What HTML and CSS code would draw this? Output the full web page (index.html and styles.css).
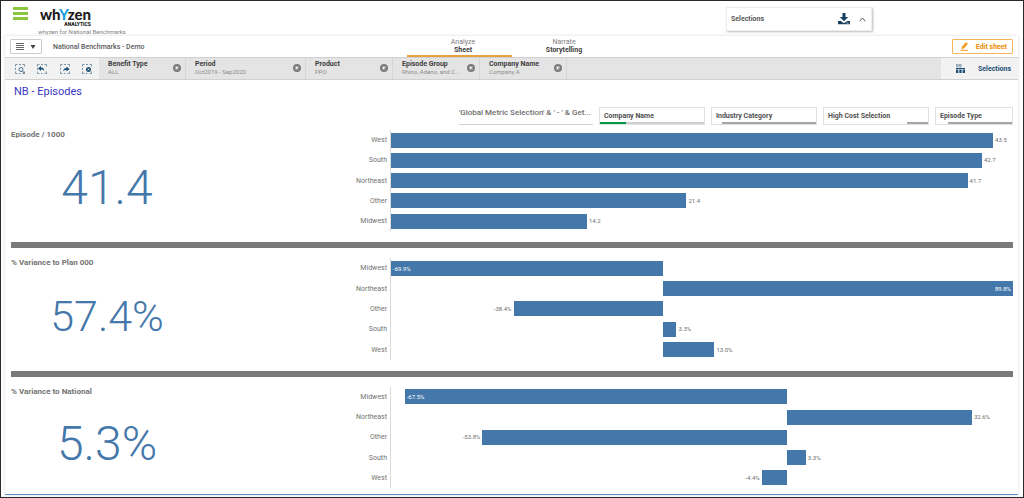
FILE: index.html
```html
<!DOCTYPE html>
<html lang="en">
<head>
<meta charset="utf-8">
<title>whyzen for National Benchmarks</title>
<link rel="stylesheet" href="styles.css">
</head>
<body>
<svg class="sprite" aria-hidden="true">
  <symbol id="clear" viewBox="0 0 8 8"><circle cx="4" cy="4" r="4" fill="#7b7b7b"/><path d="M2.6 2.6l2.8 2.8M5.4 2.6L2.6 5.4" stroke="#fff" stroke-width="1.1"/></symbol>
  <symbol id="marquee" viewBox="0 0 10 10"><path d="M.5 2.500V.5h2M4 .5h2M7.500.5h2v2M.5 4v2M.5 7.500v2h2M4 9.500h1.500M9.500 7.500v2h-2" fill="none" stroke="#6c8ba3" stroke-width=".9"/></symbol>
</svg>
<header class="header">
  <button class="menu" aria-label="Menu"><i></i><i></i><i></i></button>
  <div class="brand">
    <div class="logo">
      <div class="logo-name">wh<b>Y</b>zen</div>
      <div class="logo-sub">ANALYTICS</div>
    </div>
    <div class="tagline">whyzen for National Benchmarks</div>
  </div>
  <div class="panel">
    <strong>Selections</strong>
    <button class="icon-button" aria-label="Download"><svg width="12" height="12" viewBox="0 0 12 12"><path d="M4.500 0h3v4h2.700L6 8.200 1.800 4h2.700z" fill="#173f5f"/><path d="M0 8h3l2 1.700h2L9 8h3v3.200H0z" fill="#173f5f"/><path d="M8.500 10h2" stroke="#fff" stroke-width=".7"/></svg></button>
    <button class="icon-button" aria-label="Collapse"><svg width="7" height="5" viewBox="0 0 7 5"><path d="M.7 4.200L3.500 1l2.800 3.200" fill="none" stroke="#555"/></svg></button>
  </div>
</header>
<div class="app">
  <div class="toolbar">
    <div class="toolbar-left">
      <button class="nav-menu" aria-label="Navigation"><svg width="20" height="7" viewBox="0 0 20 7"><path d="M0 .5h8M0 2.500h8M0 4.500h8M0 6.500h8" stroke="#666" shape-rendering="crispEdges"/><path d="M14.500 2h5L17 6z" fill="#444"/></svg></button>
      <span class="app-name">National Benchmarks - Demo</span>
    </div>
    <nav class="tabs">
      <a class="tab active" href="#sheet"><span>Analyze</span><b>Sheet</b></a>
      <a class="tab" href="#story"><span>Narrate</span><b>Storytelling</b></a>
    </nav>
    <button class="edit"><svg width="9" height="9" viewBox="0 0 9 9"><path d="M1.300 7l.6-2.200L6 .3l2 1.500-4.200 4.600z" fill="#f59a1c"/><path d="M.5 8.300h7.500" stroke="#f59a1c"/></svg>Edit sheet</button>
  </div>
  <div class="selections">
    <div class="tools">
      <button class="icon-button" aria-label="Smart search"><svg width="10" height="10"><use href="#marquee"/><circle cx="6" cy="5.500" r="2" fill="none" stroke="#46718f"/><path d="M7.500 7L9.500 9.500" stroke="#46718f"/></svg></button>
      <button class="icon-button" aria-label="Step back"><svg width="10" height="10"><use href="#marquee"/><path d="M1 4.500L4 2v1.500c2 0 3 1 3.500 3.500C6.500 5.700 5.500 5.500 4 5.500V7z" fill="#1d4e73"/></svg></button>
      <button class="icon-button" aria-label="Step forward"><svg width="10" height="10"><use href="#marquee"/><path d="M9.500 5L6.500 2.500V4C4.500 4 3.500 5 3 7.500 4 6.200 5 6 6.500 6v1.500z" fill="#1d4e73"/></svg></button>
      <button class="icon-button" aria-label="Clear all"><svg width="10" height="10"><use href="#marquee"/><circle cx="6.500" cy="5.500" r="2.500" fill="#1d4e73"/><path d="M5.600 4.600l1.800 1.800M7.400 4.600L5.600 6.400" stroke="#fff" stroke-width=".7"/></svg></button>
    </div>
    <div class="selection"><div class="selection-text"><b>Benefit Type</b><span>ALL</span></div><button class="icon-button" aria-label="Clear Benefit Type"><svg width="8" height="8"><use href="#clear"/></svg></button></div>
    <div class="selection wide"><div class="selection-text"><b>Period</b><span>Oct2019 - Sep2020</span></div><button class="icon-button" aria-label="Clear Period"><svg width="8" height="8"><use href="#clear"/></svg></button></div>
    <div class="selection"><div class="selection-text"><b>Product</b><span>PPO</span></div><button class="icon-button" aria-label="Clear Product"><svg width="8" height="8"><use href="#clear"/></svg></button></div>
    <div class="selection"><div class="selection-text"><b>Episode Group</b><span>Rhino, Adeno, and C...</span></div><button class="icon-button" aria-label="Clear Episode Group"><svg width="8" height="8"><use href="#clear"/></svg></button></div>
    <div class="selection"><div class="selection-text"><b>Company Name</b><span>Company A</span></div><button class="icon-button" aria-label="Clear Company Name"><svg width="8" height="8"><use href="#clear"/></svg></button></div>
    <button class="selections-tool"><svg width="9" height="9" viewBox="0 0 9 9"><path d="M.4.4h1.800v1.800H.4zM3.400.4h1.800v1.800H3.400zM.4 3h1.800M3.400 3h1.800" fill="none" stroke="#6c8ba3" stroke-width=".8"/><path d="M0 4h9v1H0zM0 5.500h2.300V9H0zM3.300 5.500h2.300V9H3.300zM6.600 5.500H9V9H6.600z" fill="#1d4e73"/></svg>Selections</button>
  </div>
  <main class="sheet">
    <h1>NB - Episodes</h1>
    <div class="filters">
      <div class="metric">'Global Metric Selection' &amp; ' - ' &amp; Get...</div>
      <button class="filter">Company Name<span class="state"><i class="chosen" style="width:25%"></i><i class="alternative" style="width:75%"></i></span></button>
      <button class="filter">Industry Category<span class="state"><i style="width:10%"></i><i class="excluded" style="width:90%"></i></span></button>
      <button class="filter">High Cost Selection<span class="state"><i style="width:80%"></i><i class="excluded" style="width:20%"></i></span></button>
      <button class="filter">Episode Type<span class="state"><i style="width:16%"></i><i class="excluded" style="width:84%"></i></span></button>
    </div>
    <section class="measure">
      <div class="kpi"><h2>Episode / 1000</h2><div class="number">41.4</div></div>
      <div class="labels"><span>West</span><span>South</span><span>Northeast</span><span>Other</span><span>Midwest</span></div>
      <div class="plot">
        <div class="row"><span class="bar" style="width:96.8%"></span><span class="value">43.5</span></div>
        <div class="row"><span class="bar" style="width:95%"></span><span class="value">42.7</span></div>
        <div class="row"><span class="bar" style="width:92.7%"></span><span class="value">41.7</span></div>
        <div class="row"><span class="bar" style="width:47.5%"></span><span class="value">21.4</span></div>
        <div class="row"><span class="bar" style="width:31.5%"></span><span class="value">14.2</span></div>
      </div>
    </section>
    <hr>
    <section class="measure">
      <div class="kpi"><h2>% Variance to Plan 000</h2><div class="number long">57.4%</div></div>
      <div class="labels"><span>Midwest</span><span>Northeast</span><span>Other</span><span>South</span><span>West</span></div>
      <div class="plot">
        <div class="row"><span class="bar" style="width:43.8%">-69.9%</span></div>
        <div class="row"><span class="offset" style="width:43.8%"></span><span class="bar end" style="width:56.2%">89.8%</span></div>
        <div class="row"><span class="offset" style="width:19.7%">-38.4%</span><span class="bar" style="width:24.1%"></span></div>
        <div class="row"><span class="offset" style="width:43.8%"></span><span class="bar" style="width:2.1%"></span><span class="value">3.3%</span></div>
        <div class="row"><span class="offset" style="width:43.8%"></span><span class="bar" style="width:8.2%"></span><span class="value">13.0%</span></div>
      </div>
    </section>
    <hr>
    <section class="measure">
      <div class="kpi"><h2>% Variance to National</h2><div class="number">5.3%</div></div>
      <div class="labels"><span>Midwest</span><span>Northeast</span><span>Other</span><span>South</span><span>West</span></div>
      <div class="plot">
        <div class="row"><span class="offset" style="width:2.2%"></span><span class="bar" style="width:61.5%">-67.5%</span></div>
        <div class="row"><span class="offset" style="width:63.7%"></span><span class="bar" style="width:29.7%"></span><span class="value">32.6%</span></div>
        <div class="row"><span class="offset" style="width:14.7%">-53.8%</span><span class="bar" style="width:49%"></span></div>
        <div class="row"><span class="offset" style="width:63.7%"></span><span class="bar" style="width:3%"></span><span class="value">3.3%</span></div>
        <div class="row"><span class="offset" style="width:59.6%">-4.4%</span><span class="bar" style="width:4.1%"></span></div>
      </div>
    </section>
  </main>
</div>
</body>
</html>
```

FILE: styles.css
```css
* { box-sizing: border-box; }
body {
  margin: 0;
  min-height: 100vh;
  display: flex;
  flex-direction: column;
  border: 1px solid #2b292b;
  background: #fff;
  font-family: Roboto, "Liberation Sans", sans-serif;
  font-size: 7px;
  line-height: 8px;
  color: #595959;
}
button {
  font: inherit;
  color: inherit;
  background: none;
  border: 0;
  padding: 0;
  display: flex;
  align-items: center;
}
a { color: inherit; text-decoration: none; }
.sprite { position: absolute; width: 0; height: 0; }
svg { display: block; }

.header {
  display: flex;
  align-items: flex-start;
  height: 35px;
  padding: 6px 151px 0 12px;
}
.menu { flex-direction: column; gap: 2px; width: 15px; }
.menu i { width: 15px; height: 3px; background: #8cc63f; }
.brand { padding-left: 10px; }
.logo { width: 53px; text-align: right; color: #1c1c1c; }
.logo-name { font: 900 15px/14px Lato, sans-serif; }
.logo-name b { color: #1a9fe0; }
.logo-sub { font-size: 5px; line-height: 7px; font-weight: 900; }
.tagline { font-size: 6px; line-height: 8px; color: #808080; }
.panel {
  display: flex;
  align-items: center;
  gap: 9px;
  width: 146px;
  height: 24px;
  margin-left: auto;
  padding: 0 5px 0 4px;
  border: 1px solid #eee;
  box-shadow: 1px 1px 2px #bbb;
}
.panel strong { flex: 1; }

.app {
  flex: 1;
  display: flex;
  flex-direction: column;
  margin: 0 5px 2px 4px;
  border-bottom: 1px solid #5b8fbd;
  box-shadow: 0 0 3px #d4d9dc;
}
.toolbar {
  display: grid;
  grid-template-columns: 1fr auto 1fr;
  height: 22px;
  padding: 0 5px;
  border-bottom: 1px solid #d0d0d0;
}
.toolbar-left { display: flex; align-items: center; gap: 11px; }
.nav-menu { width: 32px; height: 15px; justify-content: center; border: 1px solid #ccc; border-radius: 1px; }
.app-name { font-weight: 500; }
.tabs { display: grid; grid-template-columns: 105px 105px; }
.tab {
  display: flex;
  flex-direction: column;
  align-items: center;
  padding-top: 2px;
  border-bottom: 2px solid transparent;
}
.tab span { color: #808080; }
.tab b { color: #404040; }
.tab.active { padding-left: 8px; border-color: #eba040; }
.edit {
  justify-self: end;
  align-self: center;
  gap: 7px;
  height: 15px;
  padding: 0 5px 0 7px;
  border: 1px solid #f8b55a;
  border-radius: 1px;
  color: #f08c00;
  font-weight: 700;
}

.selections {
  display: flex;
  height: 22px;
  background: #e4e4e4;
  border-bottom: 1px solid #d0d0d0;
}
.tools { display: flex; align-items: center; justify-content: space-between; width: 94px; padding: 0 7px 0 10px; background: #f2f2f2; }
.selection {
  display: flex;
  justify-content: space-between;
  width: 87px;
  padding: 3px 4px 0 9px;
  border-right: 1px solid #d6d6d6;
}
.selection.wide { width: 120px; }
.selection-text { white-space: nowrap; }
.selection-text b { display: block; line-height: 7px; color: #404040; }
.selection-text span { display: block; font-size: 6px; line-height: 7px; color: #8c8c8c; }
.selection .icon-button { height: 14px; }
.selections-tool {
  justify-content: space-between;
  width: 77px;
  margin-left: auto;
  padding: 0 7px 0 15px;
  background: #f2f2f2;
  color: #1d4e73;
  font-weight: 700;
}

.sheet { flex: 1; display: flex; flex-direction: column; padding: 0 5px 6px 6px; }
h1 { margin: 0 0 8px; padding: 4px 3px 0; font-size: 11px; line-height: 15px; font-weight: 400; color: #3a37c0; }
.filters {
  display: grid;
  grid-template-columns: 134fr 106fr 106fr 106fr 78fr;
  gap: 6px;
  width: 55.3%;
  height: 18px;
  margin-left: auto;
}
.metric { min-width: 0; font-size: 8px; line-height: 12px; font-weight: 500; color: #6e6e6e; border-bottom: 1px solid #d0d0d0; white-space: nowrap; }
.filter {
  flex-direction: column;
  align-items: stretch;
  justify-content: space-between;
  padding-top: 4px;
  border: 1px solid #e0e0e0;
  text-align: left;
  text-indent: 4px;
  font-weight: 700;
  color: #505050;
}
.state { display: flex; height: 2px; }
.chosen { background: #009845; }
.alternative { background: #d0d0d0; }
.excluded { background: #a6a6a6; }

.measure {
  flex: 1;
  display: grid;
  grid-template-columns: 192fr 187fr 623fr;
  padding: 10px 0 11px;
}
.filters + .measure { padding-top: 5px; }
.measure:last-child { padding-bottom: 0; }
hr { width: 100%; height: 6px; margin: 0; border: 0; background: #7b7a78; }
.kpi { display: flex; flex-direction: column; }
h2 { margin: 0; font-size: 8px; line-height: 10px; font-weight: 700; color: #737373; }
.number {
  flex: 1;
  display: flex;
  align-items: center;
  justify-content: center;
  padding-top: 4px;
  font-size: 48px;
  line-height: 48px;
  font-weight: 300;
  color: #4477aa;
}
.number.long { font-size: 43px; }
.labels, .plot { display: grid; grid-template-rows: repeat(5, 1fr); min-height: 101px; }
.labels { align-items: center; justify-items: end; padding-right: 3px; color: #737373; }
.plot { border-left: 1px solid #d9d9d9; font-size: 6px; line-height: 8px; color: #6e6e6e; }
.row { display: flex; align-items: center; }
.bar { flex: none; height: 15px; padding: 4px 2px; background: #4477aa; color: #fff; }
.bar.end { text-align: right; }
.offset { flex: none; padding-right: 2px; text-align: right; }
.value { padding-left: 2px; }
```
